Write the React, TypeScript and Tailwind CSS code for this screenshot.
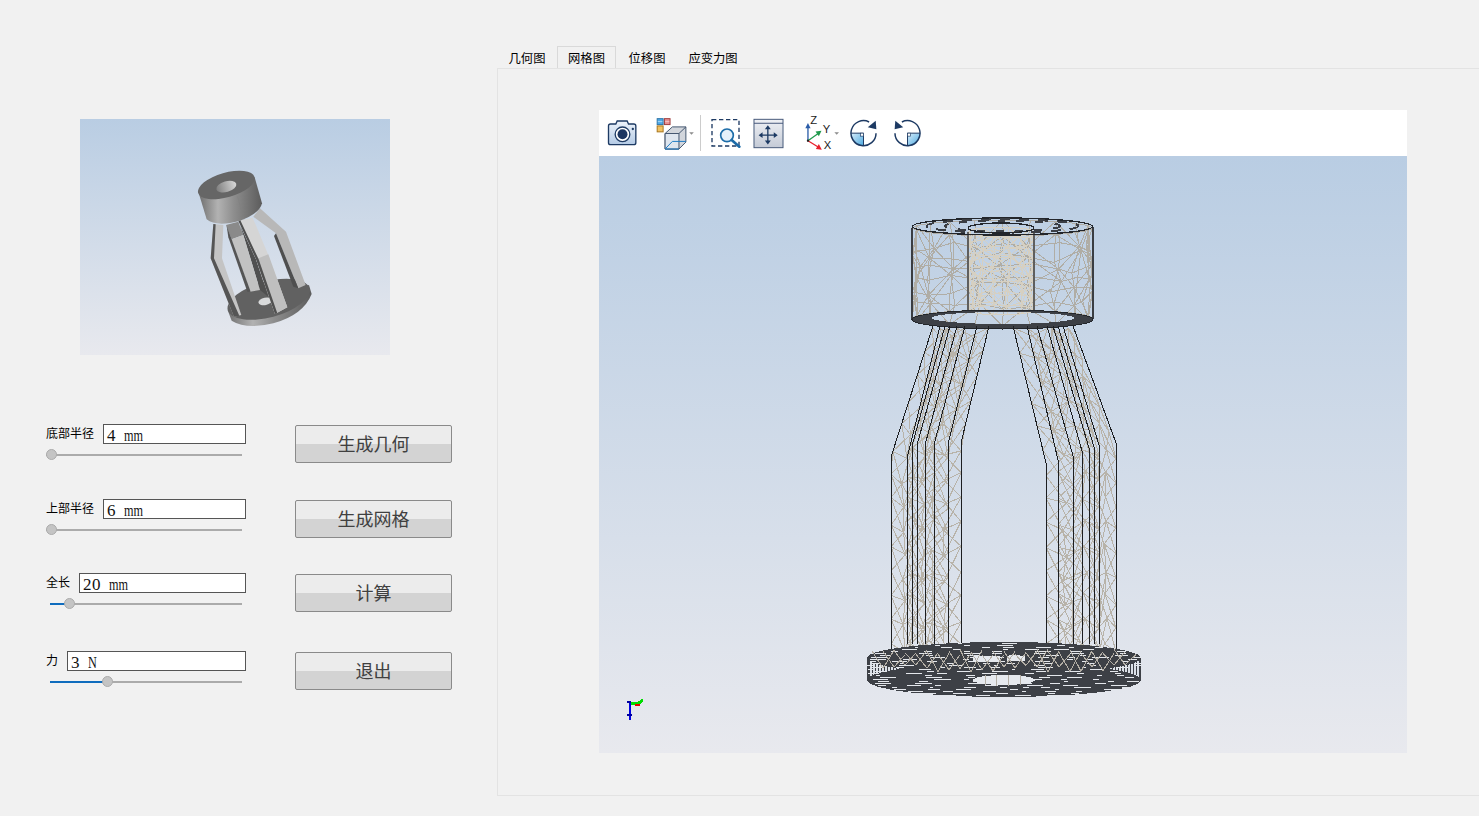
import React from "react";

const cjk = "[font-family:'Noto_Sans_CJK_SC','Liberation_Sans',sans-serif]";

let s = 12345;
const rnd = () => {
  s = (s * 1664525 + 1013904223) % 4294967296;
  return s / 4294967296;
};
const j = (a: number) => (rnd() - 0.5) * 2 * a;
const f = (n: number) => n.toFixed(1);
const seg = (a: number[], b: number[]) => `M${f(a[0])} ${f(a[1])}L${f(b[0])} ${f(b[1])}`;

function cyl(cx: number, R: number, yT: number, yB: number, ry: number, n: number, rows: number, amp: number) {
  const P: number[][][] = [];
  for (let i = 0; i < n; i++) {
    const t = (Math.PI * 2 * i) / n;
    const row: number[][] = [];
    for (let k = 0; k <= rows; k++) {
      const inner = k > 0 && k < rows;
      const x = cx + R * Math.cos(t) + (inner ? j(amp) : 0);
      row.push([
        Math.min(cx + R, Math.max(cx - R, x)),
        yT + ((yB - yT) * k) / rows + ry * Math.sin(t) + (inner ? j(amp) : 0),
      ]);
    }
    P.push(row);
  }
  let d = "";
  for (let i = 0; i < n; i++) {
    const nx = P[(i + 1) % n];
    for (let k = 0; k <= rows; k++) {
      d += seg(P[i][k], nx[k]);
      if (k < rows) {
        d += seg(P[i][k], P[i][k + 1]);
        d += (i + k) % 2 ? seg(P[i][k], nx[k + 1]) : seg(nx[k], P[i][k + 1]);
      }
    }
  }
  return d;
}

const edges = [
  [933, 891, 457], [940, 907, 458], [945, 912, 446], [950, 917, 445], [957, 925, 445], [965, 934, 445], [977, 948, 444], [989, 961, 443],
  [1013, 1046, 463], [1027, 1058, 460], [1037, 1073, 456], [1047, 1082, 451], [1053, 1089, 448], [1058, 1094, 447], [1063, 1099, 445], [1073, 1116, 443],
];
const TOP = 326;
const BOT = 650;
const ex = (e: number, y: number) => {
  const [a, b, c] = edges[e];
  return y >= c ? b : a + ((b - a) * (y - TOP)) / (c - TOP);
};

function strip(ea: number, eb: number, cols: number, step: number) {
  let d = "";
  const rows = Math.round((BOT - 6 - TOP) / step);
  const P: number[][][] = [];
  for (let r = 0; r <= rows; r++) {
    const y0 = TOP + 2 + (r * (BOT - 8 - TOP)) / rows;
    const row: number[][] = [];
    for (let c = 0; c <= cols; c++) {
      let u = c / cols;
      if (r % 2 && c > 0 && c < cols) u += 0.06 * (c % 2 ? 1 : -1);
      const y = y0 + (r > 0 && r < rows ? j(3) : 0);
      const x = ex(ea, y) + (ex(eb, y) - ex(ea, y)) * u;
      row.push([x + (c > 0 && c < cols ? j(1.5) : 0), y + (c % 2 ? step / 3 : 0)]);
    }
    P.push(row);
  }
  for (let r = 0; r <= rows; r++) {
    for (let c = 0; c <= cols; c++) {
      if (c < cols && rnd() > 0.25) d += seg(P[r][c], P[r][c + 1]);
      if (r < rows) {
        if (c < cols) {
          d += seg(P[r][c], P[r + 1][c + 1]);
          d += seg(P[r][c + 1], P[r + 1][c]);
        }
        if (rnd() > 0.5) d += seg(P[r][c], P[r + 1][c]);
      }
    }
  }
  return d;
}

const meshOuter = cyl(1002.5, 90, 228, 318, 8, 20, 4, 6);
const meshInner = cyl(1001, 33, 232, 310, 5, 14, 7, 4);
const meshLegs =
  strip(0, 4, 3, 24) + strip(1, 6, 3, 24) + strip(4, 7, 2, 24) +
  strip(8, 11, 2, 24) + strip(9, 14, 3, 24) + strip(12, 15, 3, 24);
const edgeLines = edges
  .map(([a, b, c], i) => {
    const broken = i % 8 > 0 && i % 8 < 7;
    return `M${a} ${TOP}L${b} ${c}L${b} ${BOT - (broken ? 6 : 0)}`;
  })
  .join("");

const CX = 1004;
function discDashes() {
  let d = "";
  for (let y = 643; y < 697; y += 2) {
    let hw = 137;
    if (y < 658) hw = 137 * Math.sqrt(Math.max(0, 1 - ((y - 658) / 16) ** 2));
    if (y > 680) hw = 137 * Math.sqrt(Math.max(0, 1 - ((y - 680) / 17) ** 2));
    let x = CX - hw + rnd() * 14;
    while (x < CX + hw - 4) {
      const len = 3 + rnd() * 14;
      d += `M${f(x)} ${y}.5h${f(Math.min(len, CX + hw - x))}`;
      x += len + 12 + rnd() * 34;
    }
  }
  return d;
}
const dashes = discDashes();

const cresPts: number[][] = [];
let cresHatch = "";
for (let dx = 102; dx <= 137; dx += 3) {
  const c = Math.sqrt(Math.max(0, 1 - (dx / 137) ** 2));
  const a = 658 + 16 * c;
  const b = 680 - 17 * c;
  if (b > a) {
    cresHatch += `M${CX - dx} ${f(a)}V${f(b)}M${CX + dx} ${f(a)}V${f(b)}`;
    cresPts.push([dx, a, b]);
  }
}
const polyFor = (sign: number) => {
  const top = cresPts.map(([dx, a]) => `${CX + sign * dx},${f(a)}`);
  const bot = [...cresPts].reverse().map(([dx, , b]) => `${CX + sign * dx},${f(b)}`);
  return [...top, ...bot].join(" ");
};

function discZig() {
  let d = "";
  for (let x = 872; x < 1118; x += 11) {
    d += `M${x} ${f(652 + j(3))}L${f(x + 11)} ${f(668 + j(4))}L${f(x + 22)} ${f(652 + j(3))}`;
  }
  return d;
}
const zig = discZig();

function MeshDrawing() {
  return (
    <svg viewBox="599 156 808 597" className="block h-[597px] w-[808px]" shapeRendering="crispEdges">
      <path d={meshOuter} fill="none" stroke="#b0ada5" strokeWidth="1" />
      <path d={meshInner} fill="none" stroke="#d6d0c2" strokeWidth="1" />
      <path d={meshLegs} fill="none" stroke="#b8b3a9" strokeWidth="1" />

      <path d="M912 228V319M1093 227V319" stroke="#3a3d42" strokeWidth="2" fill="none" />
      <path d="M968 232V312M1034 232V312" stroke="#5f5f5e" strokeWidth="2" fill="none" />

      {/* top ring */}
      <ellipse cx="1002.5" cy="226.5" rx="90" ry="8.5" fill="none" stroke="#23262b" strokeWidth="1.4" />
      <ellipse cx="1002.5" cy="226" rx="76" ry="6.6" fill="none" stroke="#3b3e44" strokeWidth="2" strokeDasharray="10 9" />
      <ellipse cx="1002.5" cy="226" rx="58" ry="5.2" fill="none" stroke="#3b3e44" strokeWidth="2" strokeDasharray="8 11" />
      <ellipse cx="1001" cy="228" rx="33" ry="5" fill="none" stroke="#23262b" strokeWidth="1.4" />

      {/* lower ring of the head */}
      <path d="M912 319.5A90.5 9.5 0 0 0 1093 319.5A90.5 9.5 0 0 0 912 319.5ZM932 318A71 6 0 0 0 1074 318A71 6 0 0 0 932 318Z" fill="#3d4046" fillRule="evenodd" />
      <ellipse cx="1002.5" cy="319.5" rx="90.5" ry="9.5" fill="none" stroke="#23262b" strokeWidth="1" />

      <path d={edgeLines} fill="none" stroke="#1c1e21" strokeWidth="1" />

      {/* base disc */}
      <path d={`M${CX - 137} 658A137 16 0 0 1 ${CX + 137} 658V680A137 17 0 0 1 ${CX - 137} 680Z`} fill="#3d4046" />
      <polygon points={polyFor(-1)} fill="#dbe0e7" />
      <polygon points={polyFor(1)} fill="#dbe0e7" />
      <path d={cresHatch} stroke="#3d4046" strokeWidth="1" />
      <path d={dashes} stroke="#e4e7ec" strokeWidth="1" fill="none" />
      <ellipse cx="1004" cy="680" rx="31" ry="5" fill="#e6e9ee" />
      <path d="M985 675V685M996 675V686M1008 675V686M1020 675V685" stroke="#b3aea5" strokeWidth="1" />
      <path d="M973 656h27v6h-27zM1007 656h18v5h-18z" fill="#e6e9ee" />
      <path d={zig} fill="none" stroke="#b3aea5" strokeWidth="1" />

      {/* triad */}
      <path d="M630 702V720" stroke="#0000e0" strokeWidth="2" />
      <path d="M627 702h4M627 715h5" stroke="#0000a0" strokeWidth="2" />
      <path d="M631 703h8l4-3" stroke="#00dd00" strokeWidth="3" fill="none" />
      <path d="M635 705h5" stroke="#e00000" strokeWidth="2" />
    </svg>
  );
}

function Thumb() {
  return (
    <svg viewBox="80 119 310 236" className="block h-[236px] w-[310px]">
      <defs>
        <linearGradient id="side" x1="0" y1="0" x2="1" y2="0">
          <stop offset="0" stopColor="#6f6f6f" />
          <stop offset="0.3" stopColor="#b2b2b2" />
          <stop offset="0.55" stopColor="#8e8e8e" />
          <stop offset="1" stopColor="#5c5c5c" />
        </linearGradient>
        <linearGradient id="hole" x1="0" y1="0" x2="1" y2="0">
          <stop offset="0" stopColor="#7e7e7e" />
          <stop offset="1" stopColor="#d8d8d8" />
        </linearGradient>
      </defs>
      <g transform="translate(160 150) scale(0.3333)">
        {/* base */}
        <path d="M203 480L215 512Q260 540 340 520Q430 495 455 432L447 405Z" fill="url(#side)" />
        <ellipse cx="326" cy="448" rx="127" ry="54" transform="rotate(-15 326 448)" fill="#616161" />
        <ellipse cx="316" cy="454" rx="21" ry="11" transform="rotate(-12 316 454)" fill="#d9dadb" />
        {/* far right leg */}
        <polygon points="300,175 378,245 437,405 415,415 348,250 280,200" fill="#b8b8b8" />
        <polygon points="348,250 415,415 400,410 342,258" fill="#4f4f4f" />
        {/* left leg */}
        <polygon points="160,222 190,225 186,325 244,495 222,500 152,325" fill="#c4c4c4" />
        <polygon points="160,222 167,223 162,325 238,497 222,500 152,325" fill="#555555" />
        {/* centre legs */}
        <polygon points="198,225 235,215 250,255 215,268" fill="#8a8a8a" />
        <polygon points="240,225 288,328 325,440 300,420 250,255" fill="#505050" />
        <polygon points="215,268 250,255 300,420 270,425" fill="#c2c2c2" />
        <polygon points="200,228 215,268 272,425 262,425 205,262" fill="#555555" />
        <polygon points="235,212 278,203 325,315 382,472 345,492 288,328" fill="#d5d5d5" />
        <polygon points="288,328 325,313 382,472 345,492" fill="#bfbfbf" />
        <polygon points="235,212 241,211 296,328 352,490 345,492 288,328" fill="#505050" />
        {/* head */}
        <path d="M117 132L140 208Q170 232 240 212Q300 190 306 160L284 82Z" fill="url(#side)" />
        <ellipse cx="199" cy="105" rx="88" ry="37" transform="rotate(-16 199 105)" fill="#666666" />
        <ellipse cx="199" cy="110" rx="31" ry="16" transform="rotate(-16 199 110)" fill="url(#hole)" />
        <path d="M233 140L252 208" stroke="#7f7f7f" strokeWidth="1.5" />
      </g>
    </svg>
  );
}

function Slider({ pct }: { pct: number }) {
  const active = pct > 0;
  return (
    <div className={`relative mt-[10px] flex h-[2px] bg-[#ababab] ${active ? "ml-[5px] w-[192px]" : "ml-[1px] w-[196px]"}`}>
      {active && <div className="h-full bg-[#0f6cbd]" style={{ width: pct }} />}
      <div
        className="absolute top-[-5px] size-[11px] rounded-full border border-[#ababab] bg-[#c4c4c4]"
        style={{ left: active ? pct - 5 : 0 }}
      />
    </div>
  );
}

function Field({ label, labelW, num, unit, pct }: { label: string; labelW: string; num: string; unit: string; pct: number }) {
  return (
    <div className="flex w-[201px] flex-col">
      <div className="flex h-5 items-center">
        <span className={`${labelW} -mt-0.5 shrink-0 pl-px text-[12px] leading-none whitespace-nowrap text-black ${cjk}`}>{label}</span>
        <div className="flex h-5 flex-1 items-center border border-[#555555] bg-white pt-[3px] pl-[3px] [font-family:'Liberation_Serif',serif] text-[17px] leading-none text-[#111111]">
          <span className="tracking-[0.5px]">{num}</span>
          <span className="ml-[8px] inline-block origin-left scale-x-[0.72] whitespace-nowrap">{unit}</span>
        </div>
      </div>
      <Slider pct={pct} />
    </div>
  );
}

function Btn({ children }: { children: React.ReactNode }) {
  return (
    <button className={`mt-px ml-[49px] flex h-[38px] w-[157px] items-center justify-center rounded-[2px] border border-[#8a8a8a] bg-[linear-gradient(#ececec_50%,#d3d3d3_50%)] pb-[3px] text-[18px] leading-none text-[#404040] ${cjk}`}>
      {children}
    </button>
  );
}

function Toolbar() {
  const navy = "#1d3a63";
  return (
    <div className="flex h-[46px] items-center bg-white">
      <svg viewBox="50 60 92 78" className="ml-[8px] h-[26px] w-[31px]">
        <defs>
          <linearGradient id="cam" x1="0" y1="0" x2="0" y2="1">
            <stop offset="0" stopColor="#edf3fa" />
            <stop offset="1" stopColor="#b4cbe6" />
          </linearGradient>
          <linearGradient id="pan" x1="0" y1="0" x2="0" y2="1">
            <stop offset="0" stopColor="#eff1f5" />
            <stop offset="1" stopColor="#c4cad6" />
          </linearGradient>
          <linearGradient id="q" x1="0" y1="0" x2="1" y2="1">
            <stop offset="0" stopColor="#d8edfa" />
            <stop offset="1" stopColor="#4ba9e0" />
          </linearGradient>
        </defs>
        <path d="M60 72h16l4-9h30l4 9h16a6 6 0 0 1 6 6v50a6 6 0 0 1-6 6H60a6 6 0 0 1-6-6V78a6 6 0 0 1 6-6Z" fill="url(#cam)" stroke={navy} strokeWidth="4" />
        <circle cx="96" cy="103" r="22" fill="#ffffff" stroke={navy} strokeWidth="4" />
        <circle cx="96" cy="103" r="15" fill="#1b3560" />
        <circle cx="127" cy="87" r="3.5" fill={navy} />
      </svg>

      <svg viewBox="192 50 120 100" className="ml-[17px] h-[33px] w-[40px]">
        <rect x="198" y="55" width="18" height="18" fill="#4fa8e6" stroke="#2f76a8" strokeWidth="3" />
        <path d="M200 64h14" stroke="#d6edfb" strokeWidth="2" />
        <rect x="220" y="55" width="17" height="18" fill="#e88f8f" stroke="#a03f3f" strokeWidth="3" />
        <path d="M222 64h13" stroke="#f8dede" strokeWidth="2" />
        <rect x="198" y="77" width="18" height="18" fill="#f2c261" stroke="#a8761f" strokeWidth="3" />
        <path d="M222 100L244 80H285V126L264 147H222Z" fill="#d2d6dc" stroke="#44566f" strokeWidth="3" />
        <path d="M264 100L285 80" fill="none" stroke="#44566f" strokeWidth="3" />
        <path d="M222 100H264V147H222Z" fill="#dfe6ef" stroke="#44566f" strokeWidth="3" />
        <path d="M222 147L244 124H285" fill="none" stroke="#1f7cc4" strokeWidth="3" />
        <path d="M222 147H264" stroke="#1f7cc4" strokeWidth="3" />
        <path d="M295 96h14l-7 8Z" fill="#8d8d8d" />
      </svg>

      <div className="ml-[5px] h-[36px] w-px bg-[#cccccc]" />

      <svg viewBox="360 52 93 90" className="ml-[9px] h-[30px] w-[31px]">
        <rect x="366" y="57" width="81" height="79" fill="none" stroke={navy} strokeWidth="4" strokeDasharray="13 8" />
        <circle cx="411" cy="104" r="19" fill="#e4f0fa" stroke="#1c6ca8" strokeWidth="5" />
        <path d="M425 118L448 138" stroke="#1c6ca8" strokeWidth="8" strokeLinecap="round" />
      </svg>

      <svg viewBox="490 53 94 92" className="ml-[12px] h-[31px] w-[31px]">
        <rect x="493" y="56" width="88" height="86" fill="url(#pan)" stroke="#46597a" strokeWidth="3" />
        <path d="M493 68h88" stroke="#46597a" strokeWidth="3" />
        <path d="M535 74L544 86H526ZM535 132L544 120H526ZM507 104L519 95V113ZM565 104L553 95V113Z" fill={navy} />
        <path d="M535 85V122M517 104H555" stroke={navy} strokeWidth="4" />
      </svg>

      <svg viewBox="640 45 112 110" className="ml-[19px] h-[37px] w-[37px]">
        <path d="M655 122V80" stroke="#2a5ca8" strokeWidth="4" />
        <path d="M655 68L663 84H647Z" fill="#2a5ca8" />
        <path d="M655 122L686 100" stroke="#1f9a4c" strokeWidth="4" />
        <path d="M696 92L688 108L678 94Z" fill="#1f9a4c" />
        <path d="M655 122L686 141" stroke="#e8202c" strokeWidth="4" />
        <path d="M697 149L679 147L688 132Z" fill="#e8202c" />
        <circle cx="655" cy="122" r="3.5" fill="#222222" />
        <text x="662" y="72" fontSize="34" fontFamily="'Liberation Sans',sans-serif" fill="#222222">Z</text>
        <text x="700" y="100" fontSize="34" fontFamily="'Liberation Sans',sans-serif" fill="#222222">Y</text>
        <text x="703" y="146" fontSize="34" fontFamily="'Liberation Sans',sans-serif" fill="#222222">X</text>
        <path d="M735 96h14l-7 8Z" fill="#8d8d8d" />
      </svg>

      <svg viewBox="778 55 86 88" className="ml-[9px] h-[29px] w-[29px]">
        <path d="M783 98H821V136A38 38 0 0 1 783 98Z" fill="url(#q)" />
        <path d="M783 98H821V136" fill="none" stroke={navy} strokeWidth="3" />
        <rect x="812" y="98" width="9" height="9" fill="#ffffff" stroke={navy} strokeWidth="2" />
        <path d="M838 64A38 38 0 1 0 859 98" fill="none" stroke={navy} strokeWidth="4.5" />
        <path d="M858 60L860 86L834 80Z" fill={navy} />
      </svg>

      <svg viewBox="908 55 86 88" className="ml-[15px] h-[29px] w-[29px]">
        <path d="M951 98H989A38 38 0 0 1 951 136Z" fill="url(#q)" />
        <path d="M989 98H951V136" fill="none" stroke={navy} strokeWidth="3" />
        <rect x="951" y="98" width="9" height="9" fill="#ffffff" stroke={navy} strokeWidth="2" />
        <path d="M934 64A38 38 0 1 1 913 98" fill="none" stroke={navy} strokeWidth="4.5" />
        <path d="M914 60L912 86L938 80Z" fill={navy} />
      </svg>
    </div>
  );
}

export default function App() {
  const tabs = [
    { t: "几何图", w: "w-[60px]" },
    { t: "网格图", w: "w-[59px]", on: true },
    { t: "位移图", w: "ml-px w-[60px]" },
    { t: "应变力图", w: "w-[72px]" },
  ];
  return (
    <div className={`flex h-[816px] w-[1479px] overflow-hidden bg-[#f1f1f1] ${cjk}`}>
      <aside className="flex w-[497px] shrink-0 flex-col pt-[119px] pl-[45px]">
        <div className="ml-[35px] w-[310px] bg-[linear-gradient(#b9cde3,#e8e9ee)]">
          <Thumb />
        </div>
        <div className="mt-[69px] flex">
          <Field label="底部半径" labelW="w-[58px]" num="4" unit="mm" pct={0} />
          <Btn>生成几何</Btn>
        </div>
        <div className="mt-[36px] flex">
          <Field label="上部半径" labelW="w-[58px]" num="6" unit="mm" pct={0} />
          <Btn>生成网格</Btn>
        </div>
        <div className="mt-[35px] flex">
          <Field label="全长" labelW="w-[34px]" num="20" unit="mm" pct={19} />
          <Btn>计算</Btn>
        </div>
        <div className="mt-[39px] flex">
          <Field label="力" labelW="w-[22px]" num="3" unit="N" pct={57} />
          <Btn>退出</Btn>
        </div>
      </aside>

      <main className="flex flex-1 flex-col pt-[46px] pb-[20px]">
        <div className="flex h-[22px] shrink-0 text-[12.3px] text-black">
          {tabs.map((x) => (
            <div
              key={x.t}
              className={`flex ${x.w} items-center justify-center pt-[2px] leading-none ${x.on ? "border border-b-0 border-[#d9d9d9]" : ""}`}
            >
              {x.t}
            </div>
          ))}
        </div>
        <section className="flex-1 border border-r-0 border-[#e3e3e3] bg-[#f1f1f1] pt-[41px] pl-[101px]">
          <div className="w-[808px]">
            <Toolbar />
            <div className="bg-[linear-gradient(#b9cde3,#e8e9ee)]">
              <MeshDrawing />
            </div>
          </div>
        </section>
      </main>
    </div>
  );
}
